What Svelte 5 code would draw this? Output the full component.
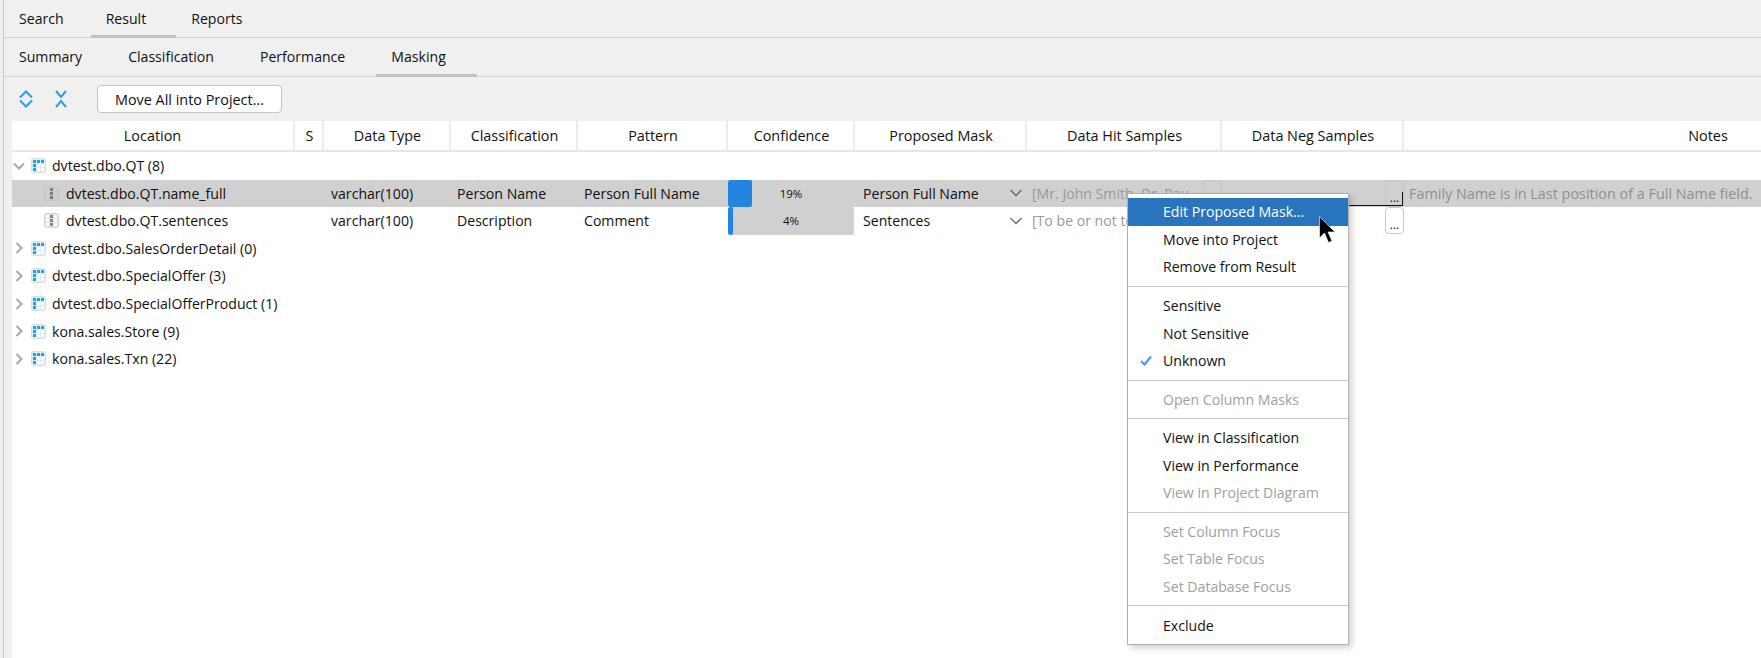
<script>
  const topTabs = ['Search', 'Result', 'Reports'];
  const subTabs = ['Summary', 'Classification', 'Performance', 'Masking'];
  const headers = ['Location', 'S', 'Data Type', 'Classification', 'Pattern', 'Confidence', 'Proposed Mask', 'Data Hit Samples', 'Data Neg Samples', 'Notes'];

  const columns = [
    { name: 'dvtest.dbo.QT.name_full', type: 'varchar(100)', cls: 'Person Name', pattern: 'Person Full Name', pct: 19, mask: 'Person Full Name', hits: '[Mr. John Smith, Dr. Pau', notes: 'Family Name is in Last position of a Full Name field.', selected: true },
    { name: 'dvtest.dbo.QT.sentences', type: 'varchar(100)', cls: 'Description', pattern: 'Comment', pct: 4, mask: 'Sentences', hits: '[To be or not to be', notes: '', selected: false }
  ];
  const tables = ['dvtest.dbo.SalesOrderDetail (0)', 'dvtest.dbo.SpecialOffer (3)', 'dvtest.dbo.SpecialOfferProduct (1)', 'kona.sales.Store (9)', 'kona.sales.Txn (22)'];

  // null = separator
  const menu = [
    { label: 'Edit Proposed Mask...', active: true },
    { label: 'Move into Project' },
    { label: 'Remove from Result' },
    null,
    { label: 'Sensitive' },
    { label: 'Not Sensitive' },
    { label: 'Unknown', checked: true },
    null,
    { label: 'Open Column Masks', disabled: true },
    null,
    { label: 'View in Classification' },
    { label: 'View in Performance' },
    { label: 'View in Project Diagram', disabled: true },
    null,
    { label: 'Set Column Focus', disabled: true },
    { label: 'Set Table Focus', disabled: true },
    { label: 'Set Database Focus', disabled: true },
    null,
    { label: 'Exclude' }
  ];
</script>

{#snippet tableIcon()}
  <svg class="ticon" width="15" height="15" viewBox="0 0 15 15">
    <rect x="0.5" y="0.5" width="14" height="14" rx="2" fill="#e4ebef" stroke="#d5e0e6" />
    <path d="M2 2h3v3H2zM6 2h3v3H6zM10 2h3v3h-3zM2 6h3v3H2zM2 10h3v3H2z" fill="#18a4f2" />
    <path d="M6 6h3v3H6zM10 6h3v3h-3zM6 10h3v3H6zM10 10h3v3h-3z" fill="#fff" />
  </svg>
{/snippet}

{#snippet columnIcon(selected)}
  <svg class="cicon" width="15" height="15" viewBox="0 0 15 15">
    <rect x="0.5" y="0.5" width="14" height="14" rx="2" fill={selected ? '#cacaca' : '#e2e2e2'} stroke={selected ? '#c6c6c6' : '#d4d4d4'} />
    <path d="M6 2h3v3H6zM6 6h3v3H6zM6 10h3v3H6z" fill={selected ? '#7c7c7c' : '#8a8a8a'} />
    <path d="M2 2h3v3H2zM2 6h3v3H2zM2 10h3v3H2zM10 2h3v3h-3zM10 6h3v3h-3zM10 10h3v3h-3z" fill={selected ? '#d0d0d0' : '#fff'} />
  </svg>
{/snippet}

{#snippet arrow(open)}
  <svg class="arrow" width="12" height="12" viewBox="0 0 12 12">
    {#if open}
      <path d="M1 3.5l5 5 5-5" fill="none" stroke="#a8a8a8" stroke-width="2" />
    {:else}
      <path d="M3.5 1l5 5-5 5" fill="none" stroke="#a8a8a8" stroke-width="2" />
    {/if}
  </svg>
{/snippet}

<div class="page">
  <div class="tabs top">
    {#each topTabs as t}
      <div class="tab" class:on={t === 'Result'}>{t}</div>
    {/each}
  </div>
  <div class="tabs sub">
    {#each subTabs as t}
      <div class="tab" class:on={t === 'Masking'}>{t}</div>
    {/each}
  </div>

  <div class="toolbar">
    <svg width="14" height="18" viewBox="0 0 14 18">
      <path d="M1 7.5l6-6 6 6M1 10.500l6 6 6-6" fill="none" stroke="#2e9be6" stroke-width="2" />
    </svg>
    <svg width="14" height="18" viewBox="0 0 14 18">
      <path d="M2 1l5 6 5-6M2 17l5-6 5 6" fill="none" stroke="#2e9be6" stroke-width="2" />
    </svg>
    <button class="move">Move All into Project...</button>
  </div>

  <div class="table">
    <div class="row head">
      {#each headers as h}
        <div class="th">{h}</div>
      {/each}
    </div>

    <div class="tree">
      {@render arrow(true)}
      {@render tableIcon()}
      <span>dvtest.dbo.QT (8)</span>
    </div>

    {#each columns as c}
      <div class="row item" class:selected={c.selected}>
        <div class="td loc">{@render columnIcon(c.selected)}<span>{c.name}</span></div>
        <div class="td"></div>
        <div class="td dtype">{c.type}</div>
        <div class="td pat">{c.cls}</div>
        <div class="td pat">{c.pattern}</div>
        <div class="td conf">
          <div class="bar">
            <div class="fill" style="width: {c.pct === 19 ? 24 : 5}px"></div>
            <span>{c.pct}%</span>
          </div>
        </div>
        <div class="td combo">
          <span>{c.mask}</span>
          <svg width="12" height="8" viewBox="0 0 12 8"><path d="M0.500 1l5.500 5.500 5.500-5.500" fill="none" stroke="#666" stroke-width="1.300" /></svg>
        </div>
        <div class="td samples">
          <span class="muted">{c.hits}</span>
          <button class="dots"></button>
        </div>
        <div class="td samples neg" class:focus={c.selected}>
          <button class="dots">...</button>
        </div>
        <div class="td muted">{c.notes}</div>
      </div>
    {/each}

    {#each tables as t}
      <div class="tree">
        {@render arrow(false)}
        {@render tableIcon()}
        <span>{t}</span>
      </div>
    {/each}
  </div>

  <div class="menu">
    {#each menu as m}
      {#if m}
        <div class="mi" class:active={m.active} class:disabled={m.disabled}>
          {#if m.checked}
            <svg class="check" width="12" height="11" viewBox="0 0 12 11"><path d="M1 6l3.500 3.500L11 1.500" fill="none" stroke="#4a9be8" stroke-width="2.200" /></svg>
          {/if}
          {m.label}
        </div>
      {:else}
        <div class="sep"></div>
      {/if}
    {/each}
  </div>

  <svg class="cursor" width="18" height="30" viewBox="0 0 18 30">
    <path d="M0.500 0.500v21.500l5-5 4 9.500 3.500-1.500-4-9h7z" fill="#000" stroke="#fff" stroke-width="0.600" />
  </svg>
</div>

<style>
  :global(body) {
    margin: 0;
    overflow: hidden;
  }

  .page {
    position: relative;
    display: flex;
    flex-direction: column;
    width: 1761px;
    height: 658px;
    box-sizing: border-box;
    padding-left: 3px;
    background: #f0f0f0;
    overflow: hidden;
    font-family: "Open Sans", "Noto Sans", sans-serif;
    font-size: 14.1px;
    color: #111;
  }

  /* tabs */
  .tabs {
    display: flex;
    height: 38px;
    flex: none;
    box-sizing: border-box;
    border-left: 1px solid #c8c8c8;
    border-bottom: 1px solid #d2d2d2;
  }
  .tabs.sub {
    height: 39px;
  }
  .tab {
    display: flex;
    align-items: center;
    padding: 0 30px 0 15px;
    margin-bottom: -1px;
    border-bottom: 3px solid transparent;
  }
  .top .tab {
    padding-top: 1px;
  }
  .top .tab:first-child {
    padding-right: 27px;
  }
  .sub .tab {
    padding-right: 31px;
  }
  .tab.on {
    border-bottom-color: #c2c2c2;
  }

  .toolbar {
    display: flex;
    align-items: center;
    gap: 21px;
    height: 44px;
    flex: none;
    box-sizing: border-box;
    padding-left: 15px;
    border-left: 1px solid #c8c8c8;
  }
  .move {
    width: 185px;
    height: 28px;
    margin-left: 8px;
    padding: 0;
    background: #fff;
    border: 1px solid #c4c4c4;
    border-radius: 4px;
    font: inherit;
    font-size: 14.4px;
    color: inherit;
  }

  /* table */
  .table {
    flex: 1;
    border-left: 1px solid #c8c8c8;
    background: linear-gradient(to right, #f0f0f0 8px, #fff 8px);
    overflow: hidden;
  }
  .row {
    display: grid;
    grid-template-columns: 283px 29px 127px 127px 150px 127px 172px 195px 182px 608px;
    margin-left: 8px;
    width: 2000px;
  }
  .head {
    height: 31px;
    border-bottom: 2px solid #e6e6e6;
    box-sizing: border-box;
    font-size: 14.4px;
  }
  .th {
    display: flex;
    align-items: center;
    justify-content: center;
    padding-left: 2px;
    border-right: 2px solid #ececec;
    box-sizing: border-box;
  }
  .th:first-child {
    padding-left: 0;
  }
  .tree {
    display: flex;
    align-items: center;
    height: 27.55px;
    margin-left: 9px;
    box-sizing: border-box;
  }
  .arrow {
    flex: none;
    margin-right: 6px;
  }
  .ticon {
    flex: none;
    margin-right: 6px;
  }
  .item {
    height: 27.55px;
  }
  .selected {
    background: #d0d0d0;
  }
  .td {
    display: flex;
    align-items: center;
    padding-left: 8px;
    white-space: nowrap;
    min-width: 0;
    position: relative;
  }
  .td.dtype {
    padding-left: 7px;
  }
  .td.pat {
    padding-left: 6px;
  }
  .td.loc {
    padding-left: 32px;
  }
  .cicon {
    flex: none;
    margin-right: 7px;
  }
  .muted {
    color: #999;
  }
  .td.muted {
    padding-left: 5px;
    color: #8f8f8f;
    font-size: 14.4px;
  }

  .td.conf {
    padding: 0 1px 0 0;
  }
  .bar {
    position: relative;
    flex: 1;
    height: 100%;
    background: #d0d0d0;
    border-radius: 2px;
    display: flex;
    align-items: center;
    justify-content: center;
    font-size: 11.5px;
    overflow: hidden;
  }
  .fill {
    position: absolute;
    left: 0;
    top: 0;
    bottom: 0;
    background: #2484e0;
    border-radius: 2px;
  }

  .combo {
    justify-content: space-between;
    padding-right: 5px;
  }
  .samples {
    padding-left: 5px;
    justify-content: space-between;
    overflow: hidden;
  }
  .neg {
    justify-content: flex-end;
    overflow: visible;
  }
  .neg.focus::after {
    content: '';
    position: absolute;
    left: 0;
    right: 1px;
    top: 12px;
    bottom: 1px;
    border-right: 1px solid #111;
    border-bottom: 1px solid #111;
    pointer-events: none;
  }
  .dots {
    flex: none;
    width: 19px;
    height: 27px;
    padding: 0 0 1px;
    display: flex;
    align-items: flex-end;
    justify-content: center;
    background: #fff;
    border: 1px solid #c8c8c8;
    border-radius: 4px;
    font: inherit;
    font-size: 12px;
    line-height: 14px;
    color: inherit;
  }
  .selected .dots {
    background: #d0d0d0;
    border-color: #c4c4c4;
  }

  /* popup */
  .menu {
    position: absolute;
    left: 1127px;
    top: 193px;
    width: 222px;
    height: 452px;
    box-sizing: border-box;
    padding-top: 4px;
    background: #fff;
    border: 1px solid #b0b0b0;
    box-shadow: 3px 3px 6px rgba(0, 0, 0, 0.18);
    overflow: hidden;
  }
  .mi {
    position: relative;
    height: 27.4px;
    line-height: 27px;
    padding-left: 35px;
    white-space: nowrap;
  }
  .mi.active {
    height: 28px;
    background: #2874bd;
    color: #fff;
  }
  .mi.disabled {
    color: #a0a0a0;
  }
  .check {
    position: absolute;
    left: 12px;
    top: 8px;
  }
  .sep {
    height: 1px;
    margin: 5.2px 0;
    background: #c8c8c8;
  }
  .cursor {
    position: absolute;
    left: 1319px;
    top: 216px;
  }
</style>
